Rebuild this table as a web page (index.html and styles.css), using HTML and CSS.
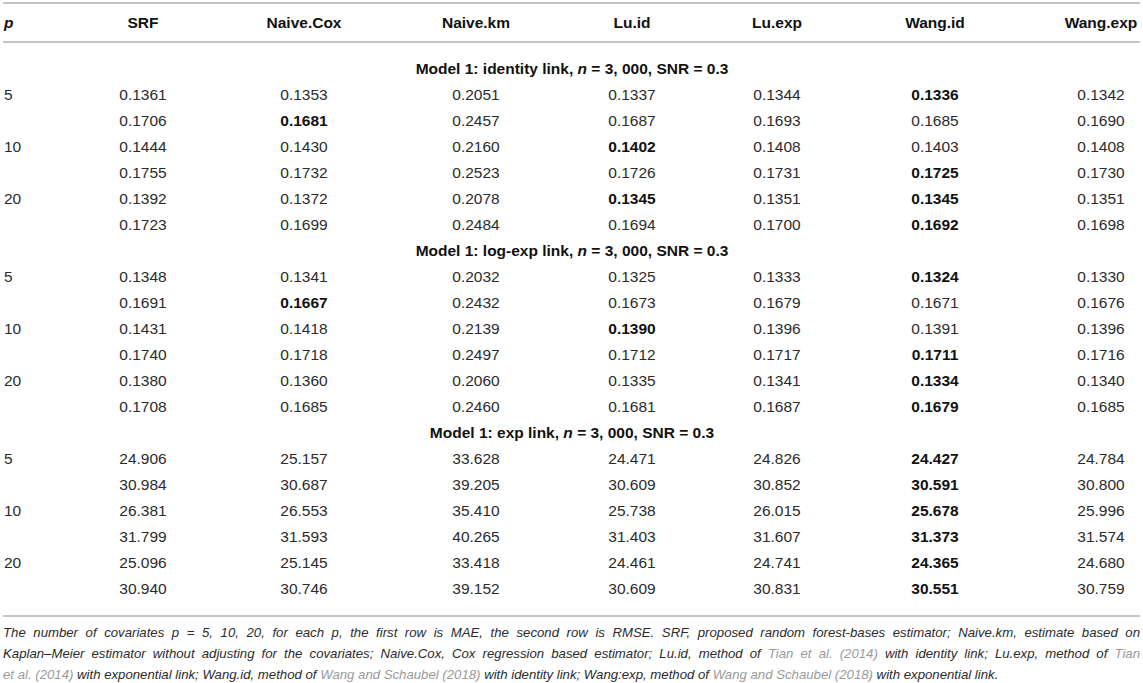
FILE: index.html
```html
<!DOCTYPE html>
<html lang="en">

<head>
    <meta charset="UTF-8">
    <meta name="viewport" content="width=device-width, initial-scale=1.0">
    <title>Model 1 results</title>
    <link rel="stylesheet" href="styles.css">
</head>

<body>
    <table class="tabla">
        <colgroup>
            <col class="col-p">
            <col class="col-srf">
            <col class="col-cox">
            <col class="col-km">
            <col class="col-luid">
            <col class="col-luexp">
            <col class="col-wangid">
            <col class="col-wangexp">
        </colgroup>
        <thead>
            <tr>
                <th class="celda-p"><i>p</i></th>
                <th>SRF</th>
                <th>Naive.Cox</th>
                <th>Naive.km</th>
                <th>Lu.id</th>
                <th>Lu.exp</th>
                <th>Wang.id</th>
                <th>Wang.exp</th>
            </tr>
        </thead>
        <tbody>
            <tr class="modelo"><td colspan="8">Model 1: identity link, <i>n</i> = 3, 000, SNR = 0.3</td></tr>
            <tr><td>5</td><td>0.1361</td><td>0.1353</td><td>0.2051</td><td>0.1337</td><td>0.1344</td><td><b>0.1336</b></td><td>0.1342</td></tr>
            <tr><td></td><td>0.1706</td><td><b>0.1681</b></td><td>0.2457</td><td>0.1687</td><td>0.1693</td><td>0.1685</td><td>0.1690</td></tr>
            <tr><td>10</td><td>0.1444</td><td>0.1430</td><td>0.2160</td><td><b>0.1402</b></td><td>0.1408</td><td>0.1403</td><td>0.1408</td></tr>
            <tr><td></td><td>0.1755</td><td>0.1732</td><td>0.2523</td><td>0.1726</td><td>0.1731</td><td><b>0.1725</b></td><td>0.1730</td></tr>
            <tr><td>20</td><td>0.1392</td><td>0.1372</td><td>0.2078</td><td><b>0.1345</b></td><td>0.1351</td><td><b>0.1345</b></td><td>0.1351</td></tr>
            <tr><td></td><td>0.1723</td><td>0.1699</td><td>0.2484</td><td>0.1694</td><td>0.1700</td><td><b>0.1692</b></td><td>0.1698</td></tr>

            <tr class="modelo"><td colspan="8">Model 1: log-exp link, <i>n</i> = 3, 000, SNR = 0.3</td></tr>
            <tr><td>5</td><td>0.1348</td><td>0.1341</td><td>0.2032</td><td>0.1325</td><td>0.1333</td><td><b>0.1324</b></td><td>0.1330</td></tr>
            <tr><td></td><td>0.1691</td><td><b>0.1667</b></td><td>0.2432</td><td>0.1673</td><td>0.1679</td><td>0.1671</td><td>0.1676</td></tr>
            <tr><td>10</td><td>0.1431</td><td>0.1418</td><td>0.2139</td><td><b>0.1390</b></td><td>0.1396</td><td>0.1391</td><td>0.1396</td></tr>
            <tr><td></td><td>0.1740</td><td>0.1718</td><td>0.2497</td><td>0.1712</td><td>0.1717</td><td><b>0.1711</b></td><td>0.1716</td></tr>
            <tr><td>20</td><td>0.1380</td><td>0.1360</td><td>0.2060</td><td>0.1335</td><td>0.1341</td><td><b>0.1334</b></td><td>0.1340</td></tr>
            <tr><td></td><td>0.1708</td><td>0.1685</td><td>0.2460</td><td>0.1681</td><td>0.1687</td><td><b>0.1679</b></td><td>0.1685</td></tr>

            <tr class="modelo"><td colspan="8">Model 1: exp link, <i>n</i> = 3, 000, SNR = 0.3</td></tr>
            <tr><td>5</td><td>24.906</td><td>25.157</td><td>33.628</td><td>24.471</td><td>24.826</td><td><b>24.427</b></td><td>24.784</td></tr>
            <tr><td></td><td>30.984</td><td>30.687</td><td>39.205</td><td>30.609</td><td>30.852</td><td><b>30.591</b></td><td>30.800</td></tr>
            <tr><td>10</td><td>26.381</td><td>26.553</td><td>35.410</td><td>25.738</td><td>26.015</td><td><b>25.678</b></td><td>25.996</td></tr>
            <tr><td></td><td>31.799</td><td>31.593</td><td>40.265</td><td>31.403</td><td>31.607</td><td><b>31.373</b></td><td>31.574</td></tr>
            <tr><td>20</td><td>25.096</td><td>25.145</td><td>33.418</td><td>24.461</td><td>24.741</td><td><b>24.365</b></td><td>24.680</td></tr>
            <tr><td></td><td>30.940</td><td>30.746</td><td>39.152</td><td>30.609</td><td>30.831</td><td><b>30.551</b></td><td>30.759</td></tr>
        </tbody>
    </table>

    <div class="nota">
        <p class="linea">The number of covariates <i class="mat">p</i> = 5, 10, 20, for each <i class="mat">p</i>, the first row is MAE, the second row is RMSE. SRF, proposed random forest-bases estimator; Naive.km, estimate based on</p>
        <p class="linea">Kaplan–Meier estimator without adjusting for the covariates; Naive.Cox, Cox regression based estimator; Lu.id, method of <a href="#">Tian et al. (2014)</a> with identity link; Lu.exp, method of <a href="#">Tian</a></p>
        <p class="ultima"><a href="#">et al. (2014)</a> with exponential link; Wang.id, method of <a href="#">Wang and Schaubel (2018)</a> with identity link; Wang:exp, method of <a href="#">Wang and Schaubel (2018)</a> with exponential link.</p>
    </div>
</body>

</html>
```

FILE: styles.css
```css
body {
    margin: 0;
    padding: 2px 3px 0 3px;
    background-color: white;
    font-family: "Liberation Sans", Arial, sans-serif;
    color: #2b2b2b;
}

.tabla {
    width: 1137px;
    border-collapse: separate;
    border-spacing: 0;
    table-layout: fixed;
    font-size: 15.5px;
}

.col-p { width: 109px; }
.col-srf { width: 62px; }
.col-cox { width: 260px; }
.col-km { width: 84px; }
.col-luid { width: 228px; }
.col-luexp { width: 62px; }
.col-wangid { width: 254px; }
.col-wangexp { width: 78px; }

.tabla th {
    height: 37px;
    padding: 0;
    border-top: 2px solid #c4c4c4;
    border-bottom: 2px solid #c4c4c4;
    font-weight: bold;
    color: #111;
    text-align: center;
    white-space: nowrap;
}

.tabla th.celda-p {
    text-align: left;
    padding-left: 1px;
}

.tabla td {
    height: 26px;
    padding: 0;
    text-align: center;
    white-space: nowrap;
}

.tabla td:first-child {
    text-align: left;
    padding-left: 1px;
}

.tabla td b {
    color: #111;
}

.tabla tr.modelo td {
    text-align: center;
    font-weight: bold;
    color: #111;
}

.tabla tbody tr:first-child td {
    padding-top: 13px;
}

.tabla tbody tr:last-child td {
    padding-bottom: 13px;
    border-bottom: 2px solid #c4c4c4;
}

.nota {
    margin-top: 5px;
    font-size: 13.2px;
    font-style: italic;
    line-height: 21px;
    color: #2b2b2b;
}

.nota p {
    margin: 0;
    white-space: nowrap;
}

.nota .linea {
    text-align: justify;
    text-align-last: justify;
    white-space: normal;
}

.nota a {
    color: #9a9a9a;
    text-decoration: none;
}
```
